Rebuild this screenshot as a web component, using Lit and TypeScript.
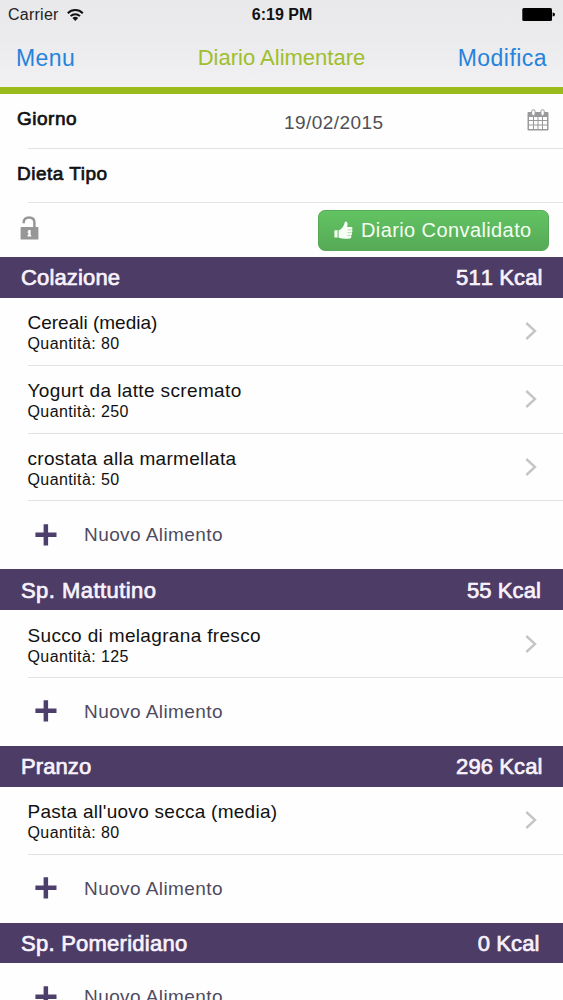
import { LitElement, html, css, svg } from "lit";
import { customElement, property } from "lit/decorators.js";
import { styleMap } from "lit/directives/style-map.js";

interface Food { name: string; qty: number; spacing: number; }
interface Meal { name: string; kcal: number; inset: number; spacing: number; foods: Food[]; }

const MEALS: Meal[] = [
  {
    name: "Colazione", kcal: 511, inset: 20.5, spacing: 0.15,
    foods: [
      { name: "Cereali (media)", qty: 80, spacing: 0 },
      { name: "Yogurt da latte scremato", qty: 250, spacing: 0.37 },
      { name: "crostata alla marmellata", qty: 50, spacing: 0.3 },
    ],
  },
  {
    name: "Sp. Mattutino", kcal: 55, inset: 22, spacing: 0.45,
    foods: [{ name: "Succo di melagrana fresco", qty: 125, spacing: 0.34 }],
  },
  {
    name: "Pranzo", kcal: 296, inset: 20.5, spacing: 0.1,
    foods: [{ name: "Pasta all'uovo secca (media)", qty: 80, spacing: 0.27 }],
  },
  { name: "Sp. Pomeridiano", kcal: 0, inset: 23.5, spacing: 0.25, foods: [] },
];

const wifi = svg`<g fill="none" stroke="#111" stroke-width="2">
  <path d="M0.8 5.2A10.6 10.6 0 0 1 15.8 5.2"/><path d="M3.6 8.1A6.6 6.6 0 0 1 13 8.1"/></g>
  <path fill="#111" d="M5.4 10.1A4.2 4.2 0 0 1 11.2 10.1L8.3 13z"/>`;

@customElement("meal-section")
export class MealSection extends LitElement {
  @property({ attribute: false }) meal!: Meal;

  static styles = css`
    :host { display: block; }
    .head {
      height: 40.8px; box-sizing: border-box; padding: 2px 0 0 21px;
      display: flex; align-items: center; justify-content: space-between;
      background: #4d3c66; color: #f8f2fc; font-size: 22px;
      -webkit-text-stroke: 0.7px #f8f2fc;
    }
    .kcal { letter-spacing: 0.1px; font-kerning: none; }
    .row {
      height: 67.9px; box-sizing: border-box; margin-left: 27.5px; padding-right: 26.5px;
      display: flex; align-items: center; justify-content: space-between;
      border-bottom: 1px solid #e2e1e3;
    }
    .food { padding-top: 4px; }
    .name { font-size: 19px; line-height: 22px; color: #111; }
    .qty { font-size: 16px; line-height: 20px; letter-spacing: 0.4px; color: #111; }
    .add {
      height: 67.9px; box-sizing: border-box; padding-left: 34.5px;
      display: flex; align-items: center; gap: 27.5px;
      color: #4f4b60; font-size: 19px; letter-spacing: 0.42px;
    }
    .plus { margin-bottom: 1px; }
    svg { display: block; flex: none; }
  `;

  render() {
    const m = this.meal;
    return html`
      <div class="head" style=${styleMap({ paddingRight: `${m.inset}px` })}>
        <span style=${styleMap({ letterSpacing: `${m.spacing}px` })}>${m.name}</span>
        <span class="kcal">${m.kcal} Kcal</span>
      </div>
      ${m.foods.map((f) => html`
        <div class="row">
          <div class="food">
            <div class="name" style=${styleMap({ letterSpacing: `${f.spacing}px` })}>${f.name}</div>
            <div class="qty">Quantità: ${f.qty}</div>
          </div>
          <svg width="12" height="18" viewBox="0 0 12 18"><path d="M1.3 1L10 9L1.3 17" fill="none" stroke="#c5c5c8" stroke-width="2.4"/></svg>
        </div>`)}
      <div class="add">
        <svg class="plus" width="22" height="22" viewBox="0 0 22 22"><path d="M8.6 0.3h4.5v8.2h8.4v4.4h-8.4v8.6H8.6v-8.6H0.4V8.5h8.2z" fill="#4d3f6b"/></svg>
        <span>Nuovo Alimento</span>
      </div>`;
  }
}

@customElement("app-root")
export class AppRoot extends LitElement {
  static styles = css`
    :host {
      display: block; width: 563px; height: 1000px; overflow: hidden; background: #fefefe;
      font-family: "Liberation Sans", Arial, sans-serif; color: #111;
    }
    svg { display: block; flex: none; }
    .top {
      height: 94px; box-sizing: border-box; border-bottom: 7px solid #9bbb1c;
      background: linear-gradient(#e9e8ea, #ebeaec 45%, #f1f0f2);
    }
    .status, .nav { display: grid; grid-template-columns: 1fr auto 1fr; align-items: center; }
    .status { height: 29px; padding: 0 8px; font-size: 16px; }
    .carrier { display: flex; align-items: center; gap: 8px; letter-spacing: 0.25px; color: #222; }
    .time { font-weight: bold; padding-left: 1px; }
    .battery { justify-self: end; }
    .nav { height: 58px; padding: 0 16px; font-size: 23px; color: #2683dc; }
    .link { letter-spacing: 0.45px; }
    .link.end { justify-self: end; }
    .title { color: #9ebf2c; font-size: 22px; letter-spacing: 0; }
    .field {
      height: 54.5px; box-sizing: border-box; padding-left: 17px;
      display: grid; grid-template-columns: 267px 1fr auto; align-items: start;
    }
    .rule { height: 1px; margin: -1px 0 0 28px; background: #e4e2e4; }
    .label {
      font-size: 19px; line-height: 22px; padding-top: 14px; letter-spacing: 0.5px;
      -webkit-text-stroke: 0.7px #111;
    }
    .value { font-size: 19px; line-height: 22px; padding-top: 18px; letter-spacing: 0.45px; color: #505054; }
    .calendar { padding: 15px 14px 0 0; }
    .confirm {
      height: 54px; box-sizing: border-box; padding: 0 14px 0 20px;
      display: flex; align-items: center; justify-content: space-between;
    }
    .lock { margin-bottom: 5px; }
    .button {
      width: 231px; height: 41px; box-sizing: border-box; padding: 1px 16px 0 15px;
      display: flex; align-items: center; gap: 7px; border: 1px solid #57a957; border-radius: 7px;
      background: linear-gradient(#62c462, #57a957); color: #f4fff2; font: inherit; font-size: 20px;
      letter-spacing: 0.4px; white-space: nowrap;
    }
  `;

  render() {
    return html`
      <header class="top">
        <div class="status">
          <span class="carrier">Carrier
            <svg width="17" height="14" viewBox="0 0 17 14">${wifi}</svg>
          </span>
          <span class="time">6:19 PM</span>
          <svg class="battery" width="33" height="13" viewBox="0 0 33 13">
            <rect x="0.3" y="0" width="29.7" height="13" rx="1.5"/><path d="M30.6 4.5Q33 4.7 33 6.5T30.6 8.5z"/>
          </svg>
        </div>
        <nav class="nav">
          <span class="link">Menu</span><span class="title">Diario Alimentare</span><span class="link end">Modifica</span>
        </nav>
      </header>
      <div class="field">
        <span class="label">Giorno</span><span class="value">19/02/2015</span>
        <svg class="calendar" width="22" height="22" viewBox="0 0 22 22">
          <path fill="#99999b" fill-rule="evenodd" d="M1.5 3H20.5Q21.5 3 21.5 4V20.5Q21.5 21.5 20.5 21.5H1.5Q.5 21.5 .5 20.5V4Q.5 3 1.5 3z
            M2 8V11H6V8zM7 8V11H10.5V8zM11.5 8V11H15V8zM16 8V11H20V8z
            M2 12V15.5H6V12zM7 12V15.5H10.5V12zM11.5 12V15.5H15V12zM16 12V15.5H20V12z
            M2 16.5V20H6V16.5zM7 16.5V20H10.5V16.5zM11.5 16.5V20H15V16.5zM16 16.5V20H20V16.5z"/>
          <rect x="4.7" y="0.7" width="3.4" height="6" rx="1.7" fill="#fefefe" stroke="#99999b"/>
          <rect x="13.9" y="0.7" width="3.4" height="6" rx="1.7" fill="#fefefe" stroke="#99999b"/>
        </svg>
      </div>
      <div class="rule"></div>
      <div class="field"><span class="label">Dieta Tipo</span></div>
      <div class="rule"></div>
      <div class="confirm">
        <svg class="lock" width="19" height="24" viewBox="0 0 19 24">
          <path d="M3.7 7.2V6.2C3.7 3.2 5.8 1.5 9 1.5S14.4 3.2 14.4 6.3V11.5" fill="none" stroke="#97979a" stroke-width="2.5"/>
          <path fill="#97979a" fill-rule="evenodd" d="M1.2 11H17.8Q18.4 11 18.4 11.6V22.9Q18.4 23.5 17.8 23.5H1.2Q.6 23.5 .6 22.9V11.6Q.6 11 1.2 11z
            M8.3 14V15.4H7.6V16.8H8.3V19H7.6V20.4H11.2V19H10.6V14z"/>
        </svg>
        <button class="button">
          <svg width="20" height="19" viewBox="0 0 20 19">
            <path fill="#f8fff6" d="M1 9.3H3.6V16.6H1Q.4 16.6 .4 16V9.9Q.4 9.3 1 9.3zM4.6 9.2C7.3 8.5 9.3 5.8 10.2 3.2C10.5 2 10.7 .4 12 .4C13.7 .6 13.9 2.8 13.1 6H17.3C18.9 6 18.9 8.5 17.6 8.7C18.9 9 18.8 11.3 17.4 11.6C18.5 12.1 18.2 14.3 16.9 14.5C17.8 15.2 17.4 17.2 16 17.4C11.8 18.2 8 17.7 4.6 16.7z"/>
            <path d="M13.7 8.8H17.3M13.5 11.7H17.1M13.2 14.6H16.7" stroke="#8fcf8a" stroke-width=".7"/>
          </svg>
          <span>Diario Convalidato</span>
        </button>
      </div>
      ${MEALS.map((m) => html`<meal-section .meal=${m}></meal-section>`)}
    `;
  }
}
